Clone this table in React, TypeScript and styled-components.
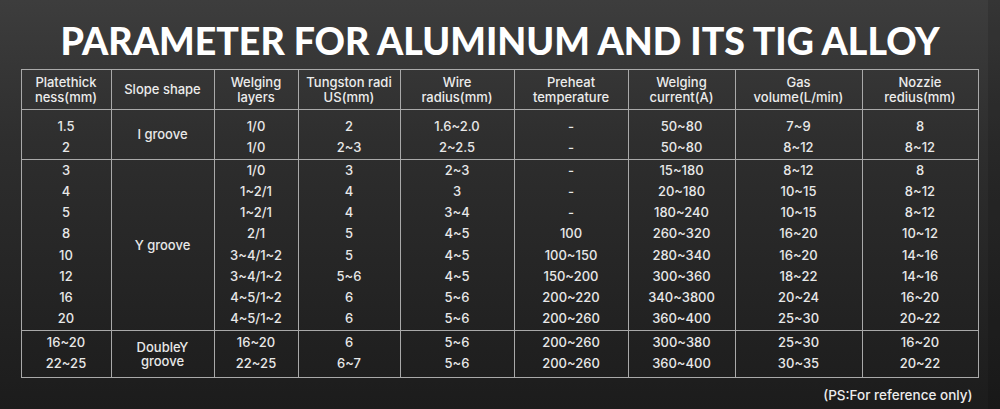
import styled, { createGlobalStyle } from 'styled-components'

const GlobalStyle = createGlobalStyle`
  html, body {
    margin: 0;
    padding: 0;
    background: #1b1b1b;
  }
`

const Page = styled.div`
  width: 1000px;
  height: 409px;
  box-sizing: border-box;
  overflow: hidden;
  display: flex;
  flex-direction: column;
  align-items: center;
  background: linear-gradient(180deg, #3d3d3d 0%, #2e2e2e 35%, #1c1c1c 100%);
  box-shadow: inset -12px 0 0 rgba(0, 0, 0, 0.12);
  font-family: Inter, 'Noto Sans', sans-serif;
  color: #e8e8e8;
`

const Title = styled.h1`
  margin: 0;
  height: 69px;
  line-height: 69px;
  padding-top: 6px;
  box-sizing: border-box;
  font-family: Lato, 'Open Sans', sans-serif;
  font-weight: 900;
  font-size: 37.5px;
  letter-spacing: 0;
  color: #ffffff;
  white-space: nowrap;
`

const Table = styled.table`
  width: 957px;
  table-layout: fixed;
  border-collapse: collapse;
  margin-left: -1px;
  font-size: 13px;
  font-weight: 500;
  text-align: center;

  td, th {
    border-left: 1px solid #a9a9a9;
    border-right: 1px solid #a9a9a9;
    padding: 0;
  }
`

const HeadCell = styled.th`
  height: 40px;
  box-sizing: border-box;
  border-top: 1px solid #a9a9a9;
  border-bottom: 1px solid #a9a9a9;
  font-weight: 500;
  font-size: 13px;
  line-height: 15px;
  color: #ececec;
`

const Cell = styled.td<{ $top?: number; $bottom?: number }>`
  height: 21.25px;
  padding-top: ${(p) => p.$top ?? 0}px !important;
  padding-bottom: ${(p) => p.$bottom ?? 0}px !important;
  line-height: 21px;
  vertical-align: middle;
  white-space: nowrap;
`

const GroupCell = styled.td`
  line-height: 14px;
  vertical-align: middle;
`

const Row = styled.tr<{ $end?: boolean }>`
  ${(p) => (p.$end ? 'border-bottom: 1px solid #a9a9a9;' : '')}
`

const Note = styled.div`
  width: 957px;
  text-align: right;
  margin-top: 9px;
  padding-right: 6px;
  box-sizing: border-box;
  font-size: 13.5px;
  font-weight: 500;
  color: #ececec;
`

const widths = [90, 103, 84, 102, 114, 114, 107, 127, 116]

const headers = [
  ['Platethick', 'ness(mm)'],
  ['Slope shape'],
  ['Welging', 'layers'],
  ['Tungston radi', 'US(mm)'],
  ['Wire', 'radius(mm)'],
  ['Preheat', 'temperature'],
  ['Welging', 'current(A)'],
  ['Gas', 'volume(L/min)'],
  ['Nozzie', 'redius(mm)'],
]

type Group = { shape: string[]; rows: string[][]; top: number; bottom: number }

const groups: Group[] = [
  {
    shape: ['I groove'],
    top: 6,
    bottom: 0,
    rows: [
      ['1.5', '1/0', '2', '1.6~2.0', '-', '50~80', '7~9', '8'],
      ['2', '1/0', '2~3', '2~2.5', '-', '50~80', '8~12', '8~12'],
    ],
  },
  {
    shape: ['Y groove'],
    top: 0,
    bottom: 0,
    rows: [
      ['3', '1/0', '3', '2~3', '-', '15~180', '8~12', '8'],
      ['4', '1~2/1', '4', '3', '-', '20~180', '10~15', '8~12'],
      ['5', '1~2/1', '4', '3~4', '-', '180~240', '10~15', '8~12'],
      ['8', '2/1', '5', '4~5', '100', '260~320', '16~20', '10~12'],
      ['10', '3~4/1~2', '5', '4~5', '100~150', '280~340', '16~20', '14~16'],
      ['12', '3~4/1~2', '5~6', '4~5', '150~200', '300~360', '18~22', '14~16'],
      ['16', '4~5/1~2', '6', '5~6', '200~220', '340~3800', '20~24', '16~20'],
      ['20', '4~5/1~2', '6', '5~6', '200~260', '360~400', '25~30', '20~22'],
    ],
  },
  {
    shape: ['DoubleY', 'groove'],
    top: 1,
    bottom: 3,
    rows: [
      ['16~20', '16~20', '6', '5~6', '200~260', '300~380', '25~30', '16~20'],
      ['22~25', '22~25', '6~7', '5~6', '200~260', '360~400', '30~35', '20~22'],
    ],
  },
]

const Lines = ({ lines }: { lines: string[] }) => (
  <>
    {lines.map((l, i) => (
      <div key={i}>{l}</div>
    ))}
  </>
)

export default function App() {
  return (
    <>
      <GlobalStyle />
      <Page>
        <Title>PARAMETER FOR ALUMINUM AND ITS TIG ALLOY</Title>
        <Table>
          <colgroup>
            {widths.map((w, i) => (
              <col key={i} style={{ width: w }} />
            ))}
          </colgroup>
          <thead>
            <tr>
              {headers.map((h, i) => (
                <HeadCell key={i}>
                  <Lines lines={h} />
                </HeadCell>
              ))}
            </tr>
          </thead>
          <tbody>
            {groups.map((g, gi) =>
              g.rows.map((r, ri) => {
                const first = ri === 0
                const last = ri === g.rows.length - 1
                const top = first ? g.top : 0
                const bottom = last ? g.bottom : 0
                const cells = r.map((v, ci) => (
                  <Cell key={ci} $top={top} $bottom={bottom}>
                    {v}
                  </Cell>
                ))
                return (
                  <Row key={`${gi}-${ri}`} $end={last}>
                    {cells[0]}
                    {first && (
                      <GroupCell rowSpan={g.rows.length}>
                        <Lines lines={g.shape} />
                      </GroupCell>
                    )}
                    {cells.slice(1)}
                  </Row>
                )
              })
            )}
          </tbody>
        </Table>
        <Note>(PS:For reference only)</Note>
      </Page>
    </>
  )
}
